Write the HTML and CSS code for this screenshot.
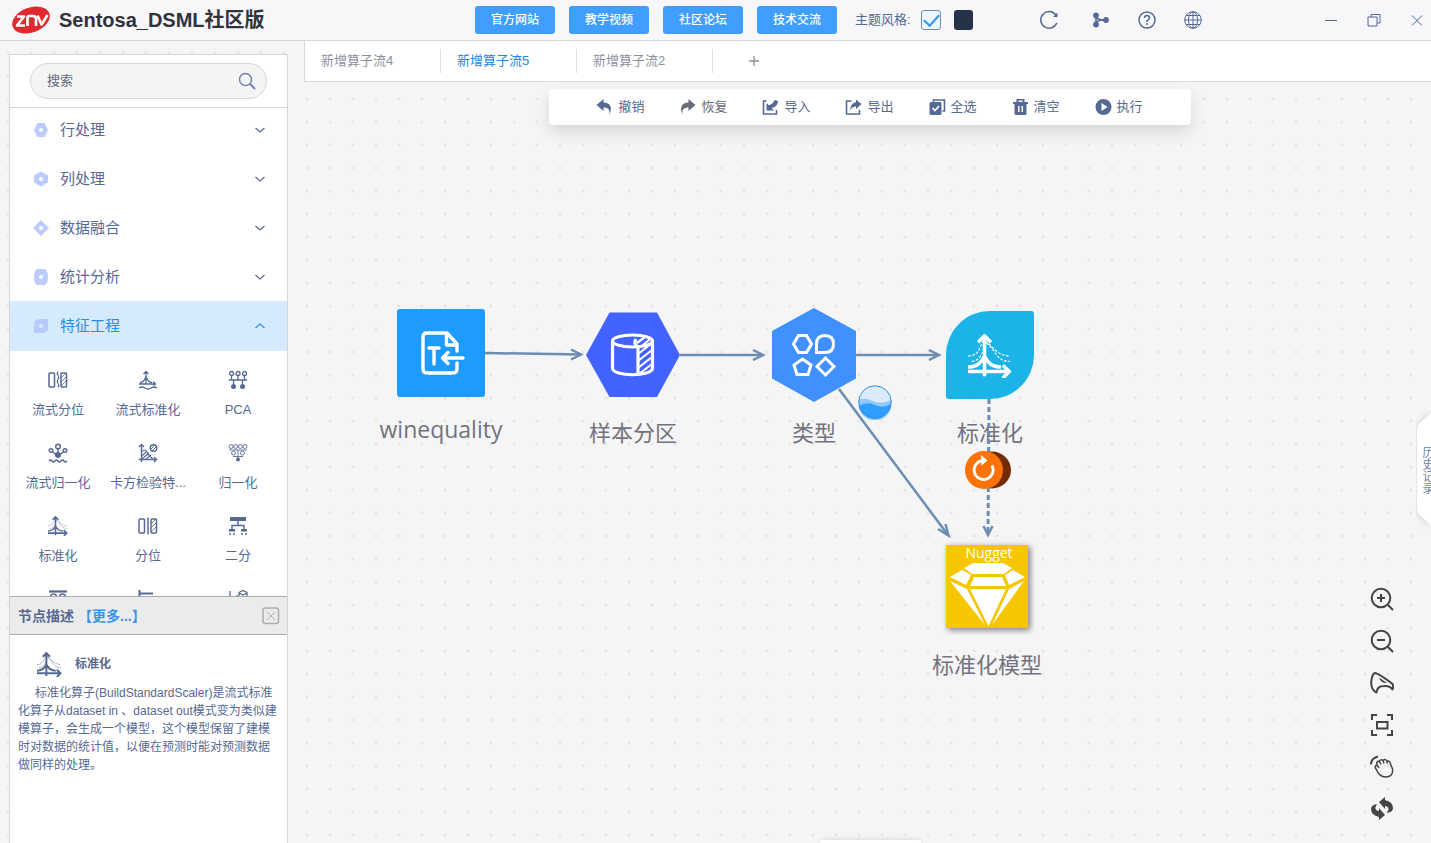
FILE: index.html
```html
<!DOCTYPE html>
<html lang="zh-CN">
<head>
<meta charset="utf-8">
<title>Sentosa_DSML社区版</title>
<link rel="stylesheet" href="styles.css">
</head>
<body>
<svg class="sprite" aria-hidden="true">
  <symbol id="standard" viewBox="0 0 24 24">
    <g fill="none" stroke="currentColor">
      <path stroke-width="1.900" d="M9 23V2M5.500 4.500 9 1l3.500 3.500M0 20.500h22.500M19 17l3.500 3.500L19 24M0 18c5 0 7-2 9-6 2 4 4 6 9 6"/>
      <path stroke-width=".6" stroke-dasharray="1.500 .8" d="M0 12c5 0 6-3 8-8 4-1 6 8 15 8M10 5c5 3 5 10 13 10M2 15c3 0 5-3 6-5"/>
    </g>
  </symbol>
  <symbol id="chevron" viewBox="0 0 12 12"><path d="M1.500 4 6 8l4.500-4" fill="none" stroke="currentColor" stroke-width="1.200"/></symbol>
</svg>

<header class="titlebar">
  <div class="brand">
    <svg class="logo" viewBox="0 0 38 30" role="img" aria-label="znv">
      <ellipse cx="19" cy="15" rx="19.500" ry="12.500" fill="#e02a30" transform="rotate(-20 19 15)"/>
      <g fill="none" stroke="#fff" stroke-width="2.600" stroke-linejoin="round">
        <path d="M5 11.500h7L5 20.500h8"/><path d="M15.500 21v-8q0-2 2-2h3.500q3 0 3 3v7"/><path d="m25.500 10.500 4 9 6-9.500"/>
      </g>
    </svg>
    <h1>Sentosa_DSML社区版</h1>
  </div>
  <nav class="links">
    <button type="button">官方网站</button>
    <button type="button">教学视频</button>
    <button type="button">社区论坛</button>
    <button type="button">技术交流</button>
  </nav>
  <div class="theme">
    <label for="light">主题风格:</label>
    <input type="checkbox" id="light" checked>
    <button type="button" class="swatch" aria-label="深色主题"></button>
  </div>
  <div class="actions">
    <button type="button" class="refresh" aria-label="刷新"><svg viewBox="0 0 20 20"><path d="M16.800 5A8.300 8.300 0 1 0 17.800 13" fill="none" stroke="currentColor" stroke-width="1.500"/><path d="M18.500 2.500v4.500h-4.500z" fill="currentColor"/></svg></button>
    <button type="button" aria-label="分支"><svg viewBox="0 0 20 20"><g fill="currentColor"><circle cx="5" cy="5.500" r="2.900"/><circle cx="5" cy="14.500" r="2.900"/><circle cx="15" cy="10" r="2.900"/></g><path d="M5 5v10M5 7q1 3 9 3M5 13q1-3 9-3" fill="none" stroke="currentColor" stroke-width="1.600"/></svg></button>
    <button type="button" aria-label="帮助"><svg viewBox="0 0 20 20"><g fill="none" stroke="currentColor" stroke-width="1.500"><circle cx="10" cy="10" r="8"/><path d="M7.500 8q0-2.500 2.500-2.500T12.500 8q0 1.500-2.500 2.700V12"/></g><circle cx="10" cy="14" r="1" fill="currentColor"/></svg></button>
    <button type="button" aria-label="语言"><svg viewBox="0 0 20 20"><g fill="none" stroke="currentColor"><circle cx="10" cy="10" r="8.300"/><ellipse cx="10" cy="10" rx="4.500" ry="8.300"/><path d="M10 1.500v17M1.500 10h17M3 5.500h14M3 14.500h14"/></g></svg></button>
  </div>
  <div class="window">
    <button type="button" aria-label="最小化"><svg viewBox="0 0 16 16"><path d="M2 8.500h12"/></svg></button>
    <button type="button" aria-label="还原"><svg viewBox="0 0 16 16"><path d="M2 5h9v9H2zM5 5V2.500h9V11h-3"/></svg></button>
    <button type="button" aria-label="关闭"><svg viewBox="0 0 16 16"><path d="m3 3.500 10 10M13 3.500l-10 10"/></svg></button>
  </div>
</header>

<div class="workspace">
  <aside class="sidebar">
    <form class="search">
      <input type="search" placeholder="搜索" aria-label="搜索">
      <svg viewBox="0 0 18 18"><g fill="none" stroke="currentColor"><circle cx="7.500" cy="7.500" r="6" stroke-width="1.500"/><path stroke-width="2" d="m12 12 5 5"/></g></svg>
    </form>
    <div class="palette">
      <div class="groups">
        <button type="button"><svg class="shape" viewBox="0 0 14 14"><path fill-rule="evenodd" d="M3.500 0h7L14 7l-3.500 7h-7L0 7zM7 5a2 2 0 1 0 .01 0z"/></svg><span>行处理</span><svg class="chev"><use href="#chevron"/></svg></button>
        <button type="button"><svg class="shape" viewBox="0 0 14 14"><path fill-rule="evenodd" d="m7-.5 7 4v7l-7 4-7-4v-7zM7 5a2 2 0 1 0 .01 0z"/></svg><span>列处理</span><svg class="chev"><use href="#chevron"/></svg></button>
        <button type="button"><svg class="shape" viewBox="0 0 14 14"><path fill-rule="evenodd" d="m7-1 8 8-8 8-8-8zM7 5a2 2 0 1 0 .01 0z"/></svg><span>数据融合</span><svg class="chev"><use href="#chevron"/></svg></button>
        <button type="button"><svg class="shape" viewBox="0 0 14 14"><path fill-rule="evenodd" d="M3-1h8q3 2 3 8t-3 8H3Q0 13 0 7t3-8zM7 5a2 2 0 1 0 .01 0z"/></svg><span>统计分析</span><svg class="chev"><use href="#chevron"/></svg></button>
        <button type="button" class="open" aria-expanded="true"><svg class="shape" viewBox="0 0 14 14"><path fill-rule="evenodd" d="M6 0h8v8q0 6-6 6H0V6q0-6 6-6zM7 5a2 2 0 1 0 .01 0z"/></svg><span>特征工程</span><svg class="chev"><use href="#chevron"/></svg></button>
      </div>
      <div class="operators">
        <div class="op"><svg viewBox="0 0 20 20"><g fill="none" stroke="currentColor" stroke-width="1.500"><rect x="1" y="3" width="5.500" height="14" rx="1"/><rect x="13" y="3" width="5.500" height="14" rx="1"/><path stroke-width="1.200" d="M10 1.500q-1.500 2 0 4t0 4 0 4 0 4"/><path stroke-width=".8" d="m13 8 5-5M13 12l5-5M13 16l5-5"/></g></svg><span>流式分位</span></div>
        <div class="op"><svg viewBox="0 0 20 20"><g fill="none" stroke="currentColor" stroke-width="1.300"><path d="M8 14V2M5.500 4 8 1.500 10.500 4M1 14h16M15 11.500l2.500 2.500-2 1.500M2 12.500q4 0 6-6 2 6 6 6M1 18q3-2 6 0t6 0 6 0"/></g></svg><span>流式标准化</span></div>
        <div class="op"><svg viewBox="0 0 20 20"><g fill="none" stroke="currentColor" stroke-width="1.300"><circle cx="3.500" cy="3.500" r="2"/><circle cx="10" cy="3.500" r="2"/><circle cx="16.500" cy="3.500" r="2"/><path d="M3.500 5.500V10M10 5.500V10M16.500 5.500V10M1 10h18M5.500 10v5M14.500 10v5"/></g><g fill="currentColor"><circle cx="5.500" cy="16.500" r="2.500"/><circle cx="14.500" cy="16.500" r="2.500"/></g></svg><span>PCA</span></div>
        <div class="op"><svg viewBox="0 0 20 20"><g fill="none" stroke="currentColor" stroke-width="1.400"><circle cx="10" cy="3.500" r="2.300"/><circle cx="3" cy="7.500" r="1.800"/><circle cx="17" cy="7.500" r="1.800"/><path d="M10 6v5M4.500 9 9 12M15.500 9 11 12M1 18q1.500-2 3 0t3 0 3 0 3 0 3 0 3 0"/></g><circle cx="10" cy="12" r="3" fill="currentColor"/></svg><span>流式归一化</span></div>
        <div class="op"><svg viewBox="0 0 20 20"><g fill="none" stroke="currentColor" stroke-width="1.400"><path d="M3.500 19V2M1 4l2.500-2.500L6 4M1 16.500h17M16 14l2.500 2.500L16 19"/><path stroke-width="1.100" d="M4 8q4-2 5 1t6 7M4 13l5-5M4 16l7-6M8 16l5-4"/><circle cx="15.500" cy="5" r="3.300"/><path stroke-width="1" d="m13 6 4-4M14 8l4-4"/></g></svg><span>卡方检验特...</span></div>
        <div class="op"><svg viewBox="0 0 20 20"><g fill="none" stroke="currentColor" stroke-width=".9"><circle cx="3" cy="3.500" r="2"/><circle cx="7.700" cy="3.500" r="2"/><circle cx="12.400" cy="3.500" r="2"/><circle cx="17" cy="3.500" r="2"/><circle cx="5.500" cy="10" r="2"/><circle cx="14.500" cy="10" r="2"/><path d="M1 7h18M5 13.500h10M10 7v9"/></g><circle cx="10" cy="16.500" r="2" fill="currentColor"/></svg><span>归一化</span></div>
        <div class="op"><svg><use href="#standard"/></svg><span>标准化</span></div>
        <div class="op"><svg viewBox="0 0 20 20"><g fill="none" stroke="currentColor" stroke-width="1.500"><rect x="1" y="3" width="5.500" height="14" rx="1"/><rect x="13" y="3" width="5.500" height="14" rx="1"/><path d="M10 1.500v17"/><path stroke-width=".8" d="m13 8 5-5M13 12l5-5M13 16l5-5"/></g></svg><span>分位</span></div>
        <div class="op"><svg viewBox="0 0 20 20"><g fill="currentColor"><path d="M2 1h16v4H2zM1 13h6v2.500H1zM13 13h6v2.500h-6z"/><circle cx="2" cy="18" r="1"/><circle cx="6" cy="18" r="1"/><circle cx="14" cy="18" r="1"/><circle cx="18" cy="18" r="1"/></g><path d="M10 5v4M4 13V9.500h12V13" fill="none" stroke="currentColor" stroke-width="1.400"/></svg><span>二分</span></div>
        <div class="op"><svg viewBox="0 0 20 20"><g fill="none" stroke="currentColor" stroke-width="1.500"><path stroke-width="2.200" d="M1 2.500h18"/><circle cx="5.500" cy="8" r="3"/><circle cx="14.500" cy="8" r="3"/></g></svg></div>
        <div class="op"><svg viewBox="0 0 20 20"><path d="M1.500 1v17M1 4.500h14" fill="none" stroke="currentColor" stroke-width="2"/></svg></div>
        <div class="op"><svg viewBox="0 0 20 20"><g fill="none" stroke="currentColor" stroke-width="1.300"><path d="M2 2v15M11 3.500l4-2 4 2v4l-4 2-4-2zM11 4l4 2 4-2M9 6v4"/></g></svg></div>
      </div>
    </div>
    <section class="detail">
      <header>
        <h2>节点描述</h2>
        <a href="#more">【更多...】</a>
        <button type="button" aria-label="关闭"><svg viewBox="0 0 18 18"><g fill="none" stroke="currentColor"><rect x="1" y="1" width="15.500" height="15.500" rx="2.500" stroke-width="1.600"/><path d="m5 5 8 8M13 5l-8 8"/></g></svg></button>
      </header>
      <div class="about">
        <h3><svg><use href="#standard"/></svg>标准化</h3>
        <p>标准化算子(BuildStandardScaler)是流式标准化算子从dataset in 、dataset out模式变为类似建模算子，会生成一个模型，这个模型保留了建模时对数据的统计值，以便在预测时能对预测数据做同样的处理。</p>
      </div>
    </section>
  </aside>

  <main class="editor">
    <div class="tabs">
      <button type="button">新增算子流4</button>
      <button type="button" class="active">新增算子流5</button>
      <button type="button">新增算子流2</button>
      <button type="button" class="add" aria-label="新增"><svg viewBox="0 0 12 12"><path d="M6 1v10M1 6h10" stroke="currentColor" stroke-width="1.300"/></svg></button>
    </div>
    <div class="canvas">
      <div class="toolbar">
        <button type="button"><svg viewBox="0 0 16 16"><path fill="currentColor" d="M0 6 7 0v3.500c7 0 9 5 6 12 .5-5-1-7-6-7V12z"/></svg>撤销</button>
        <button type="button" class="redo"><svg viewBox="0 0 16 16"><path fill="currentColor" d="M16 6 9 0v3.500C2 3.500 0 8.500 3 15.500c-.5-5 1-7 6-7V12z"/></svg>恢复</button>
        <button type="button"><svg viewBox="0 0 16 16"><path d="M4 2H1v13h13v-4" fill="none" stroke="currentColor" stroke-width="1.600"/><path fill="currentColor" d="M4 11.500V4l2.200 2.200Q10.500 5.500 12 1l3.500 1Q15 8 9 9l2.500 2.500z"/></svg>导入</button>
        <button type="button"><svg viewBox="0 0 16 16"><path d="M6 2H1v13h13v-4" fill="none" stroke="currentColor" stroke-width="1.600"/><path fill="currentColor" d="M16 5 10.500.5v2.700Q5 4 4.500 11.500q2-4 6-4V10z"/></svg>导出</button>
        <button type="button"><svg viewBox="0 0 16 16"><path d="M4 3V1h11v11h-2" fill="none" stroke="currentColor" stroke-width="1.600"/><rect y="3" width="12" height="13" rx="1.500" fill="currentColor"/><path d="m3 9 2.500 2.500L9.500 7" fill="none" stroke="#fff" stroke-width="1.600"/></svg>全选</button>
        <button type="button"><svg viewBox="0 0 16 16"><path fill="currentColor" fill-rule="evenodd" d="M.5 3H4V0h8v3h3.500v2H14v9.500q0 1.500-1.500 1.500h-9Q2 16 2 14.500V5H.5zM6 1.500V3h4V1.500zM5.500 7v6H7V7zM9 7v6h1.500V7z"/></svg>清空</button>
        <button type="button"><svg viewBox="0 0 16 16"><circle cx="8" cy="8" r="8" fill="currentColor"/><path d="m6 4 6 4-6 4z" fill="#fff"/></svg>执行</button>
      </div>

      <figure class="node source">
        <svg viewBox="0 0 96 96"><rect x="4" y="4" width="88" height="88" rx="3" fill="#1e9bff"/>
          <g fill="none" stroke="#fff" stroke-width="3.400" stroke-linejoin="round" stroke-linecap="round"><path d="M64 58v6q0 4-4 4H34q-4 0-4-4V32q0-4 4-4h20l10 11v7M53.500 29v11H64M36 43h10M41 43v16"/><path d="M70 53H50M55 47.500 49.500 53l5.500 5.500"/></g></svg>
        <figcaption>winequality</figcaption>
      </figure>
      <figure class="node split">
        <svg viewBox="0 0 96 96"><path d="M1 48 24.500 5.500H72L95 48 72 90H24.500z" fill="#4263ff"/>
          <g fill="none" stroke="#fff" stroke-width="3.200" stroke-linejoin="round"><path d="M27.500 34v27c0 9 40 9 40 0V34"/><ellipse cx="47.500" cy="34" rx="20" ry="6"/><path d="M53 40v28M53 40q-5-3-2-8" /><path d="M53 47l14-11M53 54l14-11M53 61l14-11M54 67l13-10M52 36l8-6M58 38l7-6" stroke-width="2.200"/></g></svg>
        <figcaption>样本分区</figcaption>
      </figure>
      <figure class="node type">
        <svg viewBox="0 0 96 96"><path d="m48 1 42 23v47.500L48 95 6 71.500V24z" fill="#4190ff"/>
          <g fill="none" stroke="#fff" stroke-width="3"><path d="M32.500 28.500h8l5 8.500-5 8.500h-8L27.500 37zM50.500 45.500V37q0-8.500 8.500-8.500t8.500 8.500-8.500 8.500zM36.500 52l8.500 6-3 9.500H31L28 58zM59.500 51l8.500 8.500-8.500 8.500-8.500-8.500z"/></g></svg>
        <figcaption>类型</figcaption>
      </figure>
      <figure class="node scaler">
        <svg viewBox="0 0 96 96"><path d="M48 4h41q3 0 3 3v41a44 44 0 0 1-44 44H7q-3 0-3-3V48A44 44 0 0 1 48 4z" fill="#1cb4e8"/><svg class="glyph" x="26" y="27" width="44" height="44"><use href="#standard"/></svg></svg>
        <figcaption>标准化</figcaption>
      </figure>
      <figure class="node model">
        <svg viewBox="0 0 96 96"><rect class="tile" x="7" y="6" width="82" height="83" fill="#f6c600"/>
          <text x="50" y="19" text-anchor="middle">Nugget</text>
          <g fill="#fff"><path d="m25 29 9-5h30l9 5-8 6H33zM11 38l12-7 9 5-5 10zM86 38l-12-7-8 5 4 10zM35 38h28l4 9H31zM11 42l17 8 18 36zM85 42l-15 8-17 36zM31 50h36L49.500 87z"/></g></svg>
        <figcaption>标准化模型</figcaption>
      </figure>

      <svg class="edges" aria-hidden="true"><g transform="translate(-304 -82)">
        <path d="M485 353l95 1.500M680 355h82M856 355h82M839 389l109 146"/>
        <path stroke-width="3" stroke-dasharray="5 3" d="M989 399l-1 136"/>
        <path class="head" d="m571 349.500 10 5-10 5M753 350l10 5-10 5M929 350l10 5-10 5M938 529l10.500 6.500-3-11.500M983.500 526l4.500 9 4.500-9"/>
      </g></svg>
      <svg class="wave" viewBox="0 0 36 36"><circle cx="18" cy="18" r="16.500" fill="#dcebfa"/><path d="M1.500 16q7-3 14 1t19-1v4a16.500 16.500 0 0 1-33 0z" fill="#94c8f8"/><path d="M2 22q8-5 16-1t16-1a16.200 16.200 0 0 1-32 2z" fill="#2f9dff"/><circle cx="18" cy="18" r="16.200" fill="none" stroke="#2f93e8"/></svg>
      <svg class="rerun" viewBox="0 0 48 40"><ellipse cx="28" cy="20" rx="19" ry="18.500" fill="#742a05"/><circle cx="20" cy="20" r="19" fill="#fb7208"/><path d="M28 15.500A9.500 9.500 0 1 1 19 10.500" fill="none" stroke="#fff" stroke-width="2.800"/><path d="m17 5 6.500 5.500-6 5z" fill="#fff"/></svg>

      <div class="viewtools">
        <button type="button" aria-label="放大"><svg viewBox="0 0 24 24"><circle cx="11" cy="11" r="9.300"/><path d="m18 18 5 5M7 11h8M11 7v8"/></svg></button>
        <button type="button" aria-label="缩小"><svg viewBox="0 0 24 24"><circle cx="11" cy="11" r="9.300"/><path d="m18 18 5 5M7 11h8"/></svg></button>
        <button type="button" aria-label="鹰眼"><svg viewBox="0 0 24 24"><path stroke-linejoin="round" d="M5 2Q8 2 22 12.500q2 2 .5 6Q20 14.500 14 15q-7 0-7.500 6.500Q1 19 1.200 11 2 3 5 2z"/><path stroke="none" fill="#454545" d="m9 6.500 8 5.500q-6 .5-8-5.500z"/></svg></button>
        <button type="button" aria-label="适应画布"><svg viewBox="0 0 24 24"><path d="M2 7V2h5M17 2h5v5M22 17v5h-5M7 22H2v-5M7 9h10.500v6.500H7z"/></svg></button>
        <button type="button" aria-label="拖动"><svg viewBox="0 0 24 24"><path d="M1 9.500Q1 3 8 1.500"/><path stroke-width="1.500" d="M6 14q-2-3 1-4-1-4 2.500-4 1-2 3.500-.5Q15.500 3.500 17 6q3-.5 3.500 3l2 5q1 8-7 8-6 0-9.500-8zM7 10l2 3M9.500 6.500l1.500 3M13 5.500l1 3M17 6.500v2"/></svg></button>
        <button type="button" aria-label="切换"><svg class="solid" viewBox="0 0 24 24"><path id="turn" d="M9 5 15 0v3q8 2 8 8 0 4-6 5 4-6-2-7v3z"/><use href="#turn" transform="rotate(180 12 11.500)"/></svg></button>
      </div>
    </div>
  </main>
</div>
<button type="button" class="history"><svg viewBox="0 0 16 120" preserveAspectRatio="none"><path d="M17 3 6 12q-5 4-5 9v78q0 5 5 9l11 10z"/></svg><span>历史记录</span></button>
<div class="drawer"></div>
</body>
</html>
```
FILE: styles.css
```css
* { box-sizing: border-box; }
html, body { height: 100%; }
body {
  margin: 0;
  display: flex;
  flex-direction: column;
  overflow: hidden;
  color: #566994;
  font: 13px/18px "Liberation Sans", "Noto Sans CJK SC", sans-serif;
  background: radial-gradient(circle at 8px 7px, #e6e6e6 1px, transparent 2px) 0 0 / 23px 23px #f5f5f5;
}
button { padding: 0; border: 0; background: none; color: inherit; font: inherit; cursor: pointer; }
svg { display: block; flex: none; }
h1, h2, h3, p, figure { margin: 0; }
.sprite { position: absolute; width: 0; height: 0; }

.titlebar {
  flex: none;
  display: flex;
  align-items: center;
  height: 41px;
  border-bottom: 1px solid #d5d6dc;
  background: #f7f7fa;
}
.brand { display: flex; align-items: center; gap: 9px; width: 475px; padding-left: 12px; }
.logo { width: 38px; height: 30px; }
h1 { color: #30333a; font-size: 20px; line-height: 28px; font-weight: bold; white-space: nowrap; }
.links { display: flex; gap: 14px; }
.links button { width: 80px; height: 28px; border-radius: 3px; background: #409eff; color: #fff; font-size: 12px; font-weight: 500; }
.theme { display: flex; align-items: center; margin-left: 18px; white-space: nowrap; }
.theme label { width: 66px; }
.theme input {
  appearance: none;
  display: grid;
  place-items: center;
  width: 20px;
  height: 20px;
  margin: 0 13px 0 0;
  border: 1px solid #7289b4;
  border-radius: 3px;
  background: #edf5fd;
}
.theme input:checked::after {
  content: "";
  width: 7px;
  height: 13px;
  margin-bottom: 4px;
  border: solid #2b93f5;
  border-width: 0 2px 2px 0;
  rotate: 42deg;
}
.swatch { width: 19px; height: 20px; border-radius: 3px; background: #263248; }
.actions { display: flex; margin-left: 53px; }
.actions button { display: grid; place-items: center; width: 46px; height: 40px; }
.actions .refresh { margin-right: 6px; }
.actions svg { width: 20px; height: 20px; }
.window { display: flex; gap: 27px; margin-left: auto; padding-right: 6px; }
.window svg { width: 16px; height: 16px; fill: none; stroke: #52658f; }

.workspace { flex: 1; min-height: 0; display: flex; }
.sidebar {
  display: flex;
  flex-direction: column;
  width: 279px;
  margin: 13px 16px 0 9px;
  border: 1px solid #d3d4dc;
  border-bottom: 0;
  background: #fff;
}
.search { position: relative; flex: none; padding: 8px 20px; border-bottom: 1px solid #d3d4dc; }
.search input {
  display: block;
  width: 100%;
  height: 36px;
  padding: 0 40px 2px 16px;
  border: 1px solid #d6d7de;
  border-radius: 18px;
  background: #f4f4f4;
  color: #555c70;
  font: inherit;
}
.search input::placeholder { color: #626779; }
.search svg { position: absolute; right: 31px; top: 17px; width: 18px; height: 18px; color: #7280b4; }
.palette { flex: 1; min-height: 0; overflow: hidden; }
.groups { margin-top: -3px; }
.groups button { display: flex; align-items: center; gap: 12px; width: 100%; height: 49px; padding: 0 21px 0 24px; font-size: 15px; text-align: left; }
.groups span { flex: 1; }
.shape { width: 14px; height: 14px; overflow: visible; fill: #bccbff; }
.chev { width: 12px; height: 12px; }
.groups .open { height: 50px; background: #d5eafd; color: #2a8ce4; }
.open .chev { rotate: 180deg; }
.open .shape { fill: #b9c9fd; }
.operators { display: grid; grid-template-columns: repeat(3, 1fr); padding: 1px 4px 0 3px; }
.op { display: flex; flex-direction: column; align-items: center; gap: 11px; height: 73px; padding-top: 18px; min-width: 0; }
.op svg { width: 20px; height: 20px; }
.op span { text-align: center; white-space: nowrap; }
.detail { flex: none; height: 247px; }
.detail > header { display: flex; align-items: center; height: 39px; padding: 0 7px 0 8px; border: solid #ababab; border-width: 1px 0; background: #ebebeb; font-weight: bold; }
h2 { font-size: 14px; line-height: 20px; }
.detail a { margin-left: 4px; color: #3a93ee; font-size: 14px; text-decoration: none; }
.detail header button { margin-left: auto; color: #b0b0b0; }
.detail header svg { width: 18px; height: 18px; }
.about { padding: 16px 8px; font-size: 12px; }
h3 { display: flex; align-items: center; gap: 13px; height: 26px; padding-left: 19px; font-size: 12px; }
h3 svg { width: 25px; height: 25px; }
.about p { margin-top: 7px; text-indent: 17px; }

.editor { flex: 1; min-width: 0; display: flex; flex-direction: column; }
.tabs { display: flex; flex: none; height: 41px; border: solid #d6d7dc; border-width: 0 0 1px 1px; background: #fff; color: #8d92a0; }
.tabs button { align-self: center; width: 136px; height: 24px; padding-left: 16px; border-right: 1px solid #dfe0e5; text-align: left; }
.tabs .active { color: #2585dc; }
.tabs .add { display: grid; place-items: center; width: 40px; margin: 0 0 0 21px; padding: 0; border: 0; }
.add svg { width: 12px; height: 12px; }
.canvas { position: relative; flex: 1; overflow: hidden; padding: 7px 0 0 4px; }
.toolbar { display: flex; justify-content: center; gap: 35px; width: 642px; height: 36px; margin: 0 auto; border-radius: 4px; background: #fff; box-shadow: 0 7px 16px rgb(0 0 0 / 12%); }
.toolbar button { display: flex; align-items: center; gap: 5px; }
.toolbar svg { width: 17px; height: 16px; }
.toolbar .redo { color: #686c76; }

.node { position: absolute; display: flex; flex-direction: column; align-items: center; width: 130px; }
.node > svg { width: 96px; height: 96px; }
.node figcaption { margin-top: 13px; color: #73737f; font: 22px/30px "Noto Sans CJK SC", sans-serif; }
.node.source figcaption { font: 23px/30px "Open Sans", sans-serif; }
.source { left: 72px; top: 223px; }
.split { left: 264px; top: 225px; }
.type { left: 445px; top: 225px; }
.scaler { left: 621px; top: 225px; }
.model { left: 618px; top: 457px; }
.glyph { color: #fff; }
.tile { filter: drop-shadow(2px 2px 3px rgb(0 0 0 / 50%)); }
.model text { fill: #fff; font: 14px "Open Sans", sans-serif; }
.edges { position: absolute; inset: 0; width: 100%; height: 100%; pointer-events: none; fill: none; stroke: #6d8db2; stroke-width: 2.5; }
.wave { position: absolute; left: 553px; top: 302px; width: 36px; height: 36px; }
.rerun { position: absolute; left: 660px; top: 368px; width: 48px; height: 40px; }

.viewtools { position: absolute; right: 37px; bottom: 22px; display: grid; gap: 18px; }
.viewtools svg { width: 24px; height: 24px; fill: none; stroke: #454545; stroke-width: 2; }
.viewtools .solid { fill: #454545; stroke: none; }
.history { position: absolute; right: 0; top: 409px; width: 15px; height: 120px; overflow: hidden; color: #7083ad; }
.history svg { position: absolute; inset: 0; width: 100%; height: 100%; overflow: visible; fill: #fff; filter: drop-shadow(0 0 3px #c5c9d8); }
.history span { position: absolute; left: 3px; top: 37px; writing-mode: vertical-rl; font-size: 12px; line-height: 16px; }
.drawer { position: absolute; left: 820px; bottom: 0; width: 101px; height: 3px; border-radius: 12px 12px 0 0; background: #fff; box-shadow: 0 0 4px #c5c9d8; }
```
